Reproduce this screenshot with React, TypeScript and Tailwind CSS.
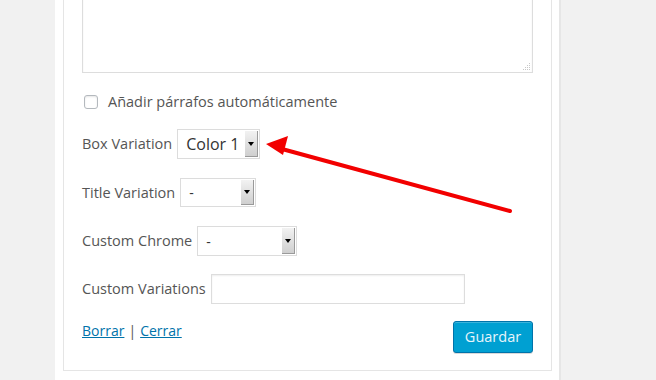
import React from "react";

function FakeSelect({ value, width, big, h = "h-[30px]" }: { value: string; width: string; big?: boolean; h?: string }) {
  return (
    <div className={`flex items-stretch border border-[#dcdcdc] bg-white p-[1px] ${h} ${width}`}>
      <div className={`flex flex-1 items-center pl-[7px] text-[#333] ${big ? "text-[16px]" : "text-[14px]"}`}>{value}</div>
      <div className="flex w-[13px] items-center justify-center border-r border-b border-[#9a9a9a] bg-gradient-to-b from-[#f2f2f2] to-[#cfcfcf]">
        <span className="h-0 w-0 border-x-[3px] border-t-[4px] border-x-transparent border-t-black" />
      </div>
    </div>
  );
}

export default function App() {
  return (
    <div className="relative flex h-[380px] w-[656px] overflow-hidden bg-[#f1f1f1] font-['Open_Sans',sans-serif] text-[14.5px] text-[#555]">
      <div className="w-[55px] shrink-0" />
      <div className="w-[506px] shrink-0 border-r-2 border-[#e6e6e6] bg-white pl-[8px] pr-[7px]">
        <div className="-mt-[40px] border border-[#e5e5e5] px-[18px] pt-[12px] pb-[17px]">
          <div className="relative h-[100px] border border-[#ddd] shadow-[inset_0_1px_2px_rgba(0,0,0,0.07)]">
            <svg className="absolute right-[1px] bottom-[1px]" width="10" height="10" viewBox="0 0 10 10">
              <g fill="#c8c8c8">
                <rect x="8" y="2" width="1" height="1" />
                <rect x="6" y="4" width="1" height="1" />
                <rect x="8" y="4" width="1" height="1" />
                <rect x="4" y="6" width="1" height="1" />
                <rect x="6" y="6" width="1" height="1" />
                <rect x="8" y="6" width="1" height="1" />
                <rect x="2" y="8" width="1" height="1" />
                <rect x="4" y="8" width="1" height="1" />
                <rect x="6" y="8" width="1" height="1" />
                <rect x="8" y="8" width="1" height="1" />
              </g>
            </svg>
          </div>

          <div className="mt-[19px] flex h-[20px] items-center">
            <span className="ml-[2px] h-[14px] w-[14px] rounded-[3px] border border-[#b4b9be] bg-white shadow-[inset_0_1px_2px_rgba(0,0,0,0.1)]" />
            <span className="ml-[10px]">Añadir párrafos automáticamente</span>
          </div>

          <div className="mt-[17px] flex items-center">
            <span className="mr-[5px]">Box Variation</span>
            <FakeSelect value="Color 1" width="w-[83px]" big />
          </div>

          <div className="mt-[19px] flex items-center">
            <span className="mr-[5px]">Title Variation</span>
            <FakeSelect value="-" width="w-[76px]" h="h-[29px]" />
          </div>

          <div className="mt-[19px] flex items-center">
            <span className="mr-[5px]">Custom Chrome</span>
            <FakeSelect value="-" width="w-[100px]" />
          </div>

          <div className="mt-[18px] flex items-center">
            <span className="mr-[5px]">Custom Variations</span>
            <div className="h-[30px] w-[254px] border border-[#ddd] bg-white shadow-[inset_0_1px_2px_rgba(0,0,0,0.07)]" />
          </div>

          <div className="mt-[17px] flex items-start justify-between">
            <div className="pt-[1px] text-[14px] leading-[18px]">
              <a className="text-[#0073aa] underline">Borrar</a>
              <span className="mx-[4px]">|</span>
              <a className="text-[#0073aa] underline">Cerrar</a>
            </div>
            <button className="h-[32px] w-[80px] rounded-[3px] border border-[#0073aa] bg-[#00a0d2] text-[14.5px] text-[#e8f5fb] shadow-[inset_0_1px_0_rgba(120,200,230,0.5),0_1px_0_rgba(0,0,0,0.15)]">
              Guardar
            </button>
          </div>
        </div>
      </div>
      <div className="flex-1" />

      <svg className="pointer-events-none absolute left-0 top-0" width="656" height="380" viewBox="0 0 656 380">
        <line x1="510" y1="211" x2="282" y2="149" stroke="#f20000" strokeWidth="4" strokeLinecap="round" />
        <polygon points="266,144 288,136 283,155" fill="#f20000" />
      </svg>
    </div>
  );
}
